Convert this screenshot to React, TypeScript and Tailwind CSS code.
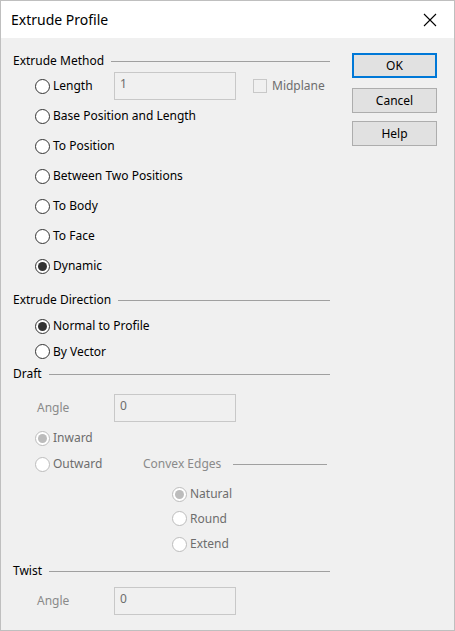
import React from 'react';

const font = { fontFamily: '"Noto Sans", "Open Sans", sans-serif' };

interface RadioProps {
  label: string;
  checked?: boolean;
  disabled?: boolean;
}

const Radio: React.FC<RadioProps> = ({ label, checked, disabled }) => (
  <div className="flex items-center">
    <span
      className={`w-[15px] h-[15px] rounded-full border flex items-center justify-center shrink-0 ${
        disabled ? 'border-[#bcbcbc] bg-white' : 'border-[#333333] bg-white'
      }`}
    >
      {checked && (
        <span className={`w-[9px] h-[9px] rounded-full ${disabled ? 'bg-[#bcbcbc]' : 'bg-[#333333]'}`} />
      )}
    </span>
    <span className={`ml-[3px] ${disabled ? 'text-[#6d6d6d]' : 'text-black'}`}>{label}</span>
  </div>
);

const Heading: React.FC<{ label: string; className?: string }> = ({ label, className }) => (
  <div className={`h-[20px] flex items-center ${className ?? ''}`}>
    <span className="text-black">{label}</span>
    <div className="flex-1 h-px bg-[#a0a0a0] ml-[7px] mt-[1px]" />
  </div>
);

const Field: React.FC<{ value: string }> = ({ value }) => (
  <div className="w-[122px] h-[28px] border border-[#c8c8c8] bg-[#f0f0f0] pl-[5px] pt-[3px] text-[#6d6d6d] leading-[16px]">
    {value}
  </div>
);

const Button: React.FC<{ label: string; primary?: boolean; className?: string }> = ({ label, primary, className }) => (
  <button
    className={`w-[85px] h-[25px] bg-[#e1e1e1] text-black flex items-center justify-center ${
      primary ? 'border-2 border-[#0078d7]' : 'border border-[#adadad]'
    } ${className ?? ''}`}
  >
    {label}
  </button>
);

export default function App() {
  return (
    <div
      className="w-[455px] h-[631px] border border-[#bfbfbf] bg-[#f0f0f0] flex flex-col text-[12px] leading-[16px] overflow-hidden"
      style={font}
    >
      <div className="h-[37px] bg-white flex items-center justify-between pl-[10px] pr-[15px] shrink-0">
        <span className="text-[14px] text-black">Extrude Profile</span>
        <svg width="14" height="14" viewBox="0 0 14 14" className="mr-[2px]">
          <path d="M1 1 L13 13 M13 1 L1 13" stroke="#000" strokeWidth="1.1" />
        </svg>
      </div>

      <div className="flex flex-1">
        {/* left column */}
        <div className="w-[329px] pl-[12px] pt-[13px] flex flex-col">
          <Heading label="Extrude Method" />
          <div className="h-[30px] flex items-center pl-[22px]">
            <div className="w-[79px]">
              <Radio label="Length" />
            </div>
            <Field value="1" />
            <div className="ml-[17px] w-[14px] h-[14px] border border-[#c8c8c8] bg-[#f0f0f0]" />
            <span className="ml-[5px] text-[#6d6d6d]">Midplane</span>
          </div>
          <div className="h-[30px] flex items-center pl-[22px]">
            <Radio label="Base Position and Length" />
          </div>
          <div className="h-[30px] flex items-center pl-[22px]">
            <Radio label="To Position" />
          </div>
          <div className="h-[30px] flex items-center pl-[22px]">
            <Radio label="Between Two Positions" />
          </div>
          <div className="h-[30px] flex items-center pl-[22px]">
            <Radio label="To Body" />
          </div>
          <div className="h-[30px] flex items-center pl-[22px]">
            <Radio label="To Face" />
          </div>
          <div className="h-[30px] flex items-center pl-[22px]">
            <Radio label="Dynamic" checked />
          </div>

          <Heading label="Extrude Direction" className="mt-[9px]" />
          <div className="h-[26px] mt-[3px] flex items-center pl-[22px]">
            <Radio label="Normal to Profile" checked />
          </div>
          <div className="h-[25px] flex items-center pl-[22px]">
            <Radio label="By Vector" />
          </div>

          <Heading label="Draft" />
          <div className="h-[28px] mt-[10px] flex items-center pl-[24px]">
            <span className="w-[77px] text-[#8a8a8a]">Angle</span>
            <Field value="0" />
          </div>
          <div className="h-[26px] mt-[3px] flex items-center pl-[22px]">
            <Radio label="Inward" checked disabled />
          </div>
          <div className="h-[26px] flex items-center pl-[22px] pr-[3px]">
            <div className="w-[108px]">
              <Radio label="Outward" disabled />
            </div>
            <span className="text-[#8a8a8a]">Convex Edges</span>
            <div className="flex-1 h-px bg-[#a0a0a0] ml-[12px]" />
          </div>
          <div className="h-[24px] mt-[5px] flex items-center pl-[159px]">
            <Radio label="Natural" checked disabled />
          </div>
          <div className="h-[25px] flex items-center pl-[159px]">
            <Radio label="Round" disabled />
          </div>
          <div className="h-[26px] flex items-center pl-[159px]">
            <Radio label="Extend" disabled />
          </div>

          <Heading label="Twist" className="mt-[4px]" />
          <div className="h-[28px] mt-[6px] flex items-center pl-[24px]">
            <span className="w-[77px] text-[#8a8a8a]">Angle</span>
            <Field value="0" />
          </div>
        </div>

        {/* right column */}
        <div className="ml-[22px] pt-[15px] flex flex-col">
          <Button label="OK" primary />
          <Button label="Cancel" className="mt-[10px]" />
          <Button label="Help" className="mt-[8px]" />
        </div>
      </div>
    </div>
  );
}
